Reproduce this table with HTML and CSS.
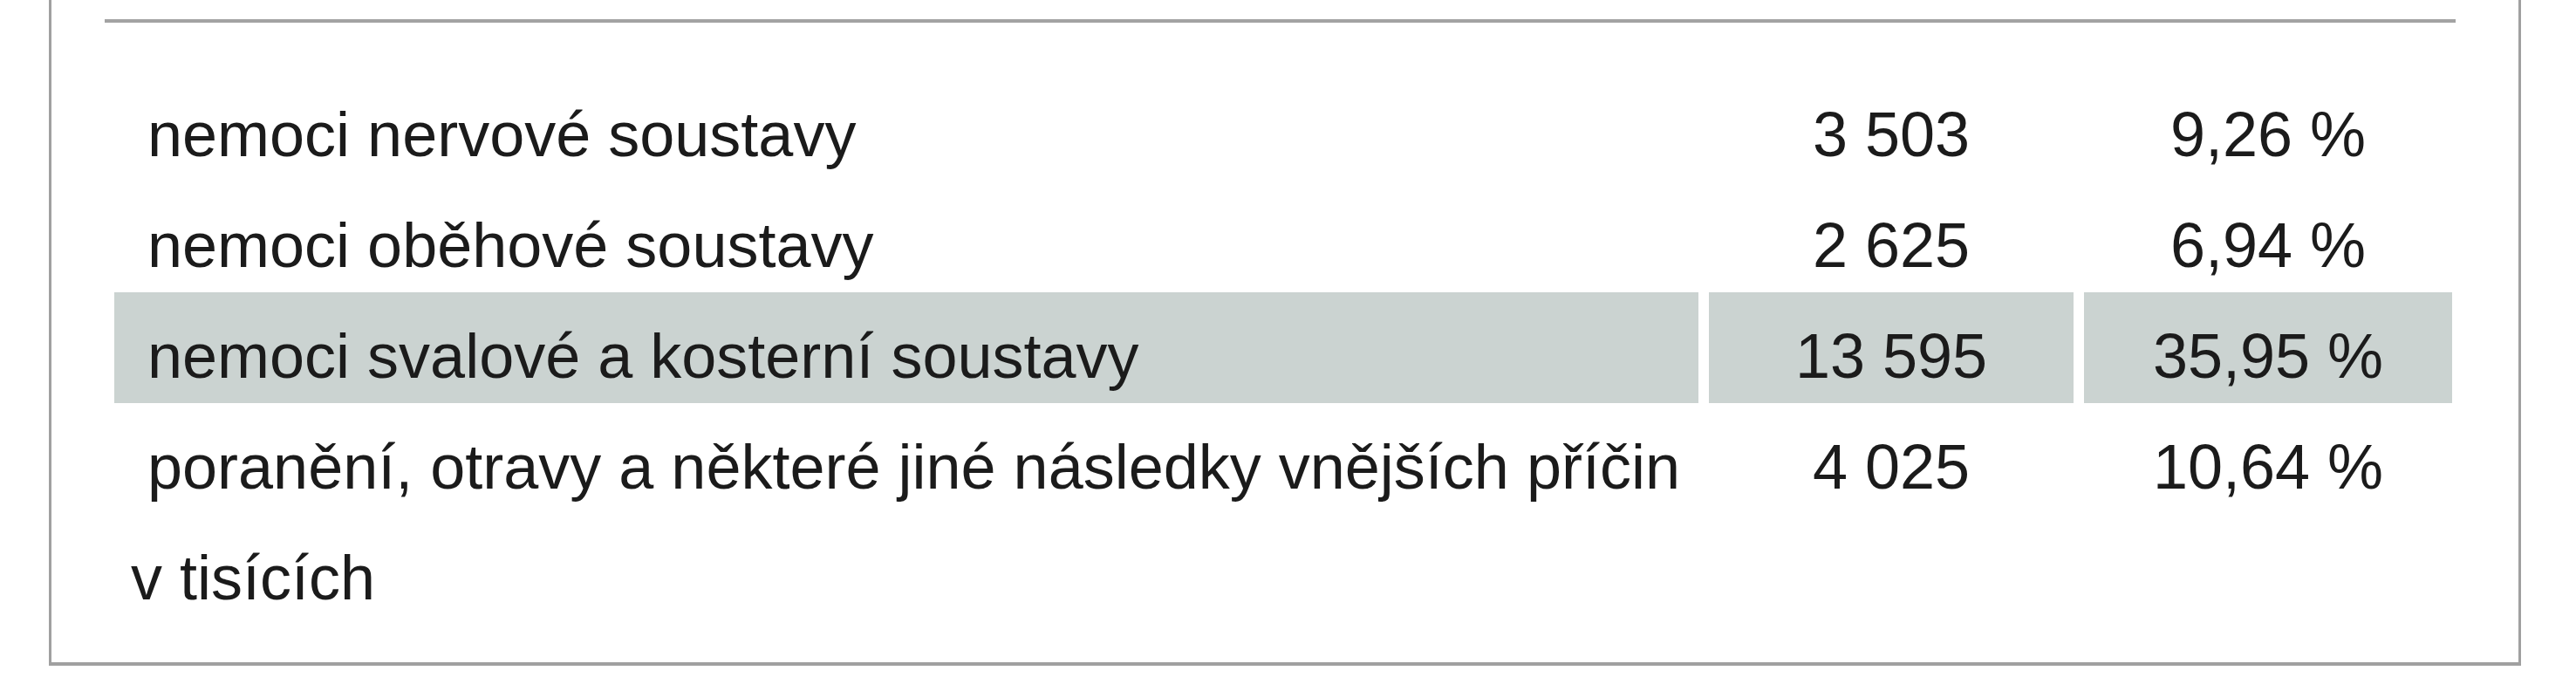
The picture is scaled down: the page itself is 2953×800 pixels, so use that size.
FILE: index.html
```html
<!DOCTYPE html>
<html lang="cs">
<head>
<meta charset="utf-8">
<title>Tabulka</title>
<link rel="stylesheet" href="styles.css">
</head>
<body>
<div class="box">
  <div class="inner">
    <div class="rule"></div>
    <div class="table">
      <div class="cell name">nemoci nervové soustavy</div>
      <div class="cell num">3 503</div>
      <div class="cell num">9,26 %</div>

      <div class="cell name">nemoci oběhové soustavy</div>
      <div class="cell num">2 625</div>
      <div class="cell num">6,94 %</div>

      <div class="cell name hl">nemoci svalové a kosterní soustavy</div>
      <div class="cell num hl">13 595</div>
      <div class="cell num hl">35,95 %</div>

      <div class="cell name">poranění, otravy a některé jiné následky vnějších příčin</div>
      <div class="cell num">4 025</div>
      <div class="cell num">10,64 %</div>
    </div>
    <div class="note">v tisících</div>
  </div>
</div>
</body>
</html>
```

FILE: styles.css
```css
html, body {
  margin: 0;
  padding: 0;
  background: #ffffff;
}

body {
  font-family: "Liberation Sans", Arial, sans-serif;
  color: #1b1b1b;
}

.box {
  margin-left: 56px;
  width: 2834px;
  height: 763px;
  border-left: 3px solid #a0a0a0;
  border-right: 3px solid #a0a0a0;
  border-bottom: 4px solid #a0a0a0;
  box-sizing: border-box;
}

.inner {
  margin-left: 61px;
  width: 2695px;
  padding-top: 22px;
}

.rule {
  height: 4px;
  background: #a3a3a3;
}

.table {
  display: grid;
  grid-template-columns: 1816px 418px 422px;
  column-gap: 12px;
  padding-left: 11px;
  margin-top: 55px;
}

.cell {
  font-size: 72px;
  line-height: 108px;
  padding-top: 19px;
  white-space: nowrap;
}

.name {
  padding-left: 38px;
}

.num {
  text-align: center;
}

.hl {
  background: #cbd3d1;
}

.note {
  font-size: 72px;
  line-height: 108px;
  padding-top: 19px;
  padding-left: 30px;
}
```
